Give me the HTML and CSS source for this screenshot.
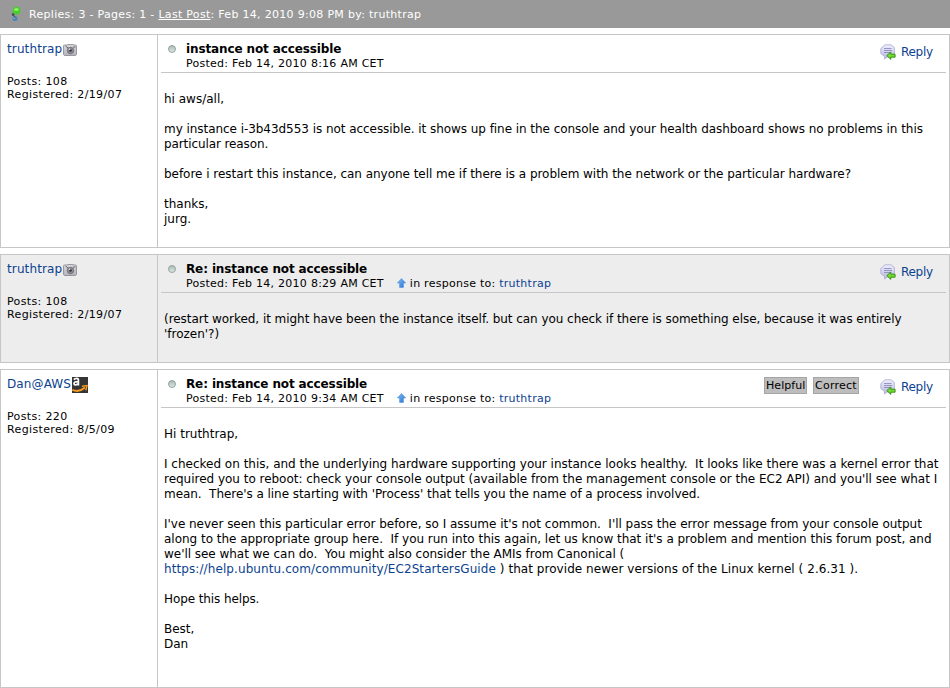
FILE: index.html
```
<!DOCTYPE html>
<html lang="en">
<head>
<meta charset="utf-8">
<title>instance not accessible</title>
<link rel="stylesheet" href="styles.css">
</head>
<body>
<svg class="sprites" width="0" height="0" aria-hidden="true">
  <defs>
    <linearGradient id="g-dot" x1="0" y1="0" x2="0" y2="1"><stop offset="0" stop-color="#a9b7b3"/><stop offset="1" stop-color="#dcebe6"/></linearGradient>
    <linearGradient id="g-bubble" x1="0" y1="0" x2="0" y2="1"><stop offset="0" stop-color="#f0f0ff"/><stop offset="1" stop-color="#b4b4e0"/></linearGradient>
    <linearGradient id="g-up" x1="0" y1="0" x2="1" y2="1"><stop offset="0" stop-color="#7fc0f8"/><stop offset="1" stop-color="#2a6ed0"/></linearGradient>
    <linearGradient id="g-cam" x1="0" y1="0" x2="0" y2="1"><stop offset="0" stop-color="#d8d8dc"/><stop offset="1" stop-color="#b4b3bb"/></linearGradient>
  </defs>
  <symbol id="dot" viewBox="0 0 8 8"><circle cx="4" cy="4" r="3.500" fill="url(#g-dot)" stroke="#8f9d99" stroke-width=".9"/></symbol>
  <symbol id="up" viewBox="0 0 9 10"><path d="M4.500.5 8.600 5H6.400v4.400H2.600V5H.4Z" fill="url(#g-up)" stroke="#4c8fdc" stroke-width=".6"/></symbol>
  <symbol id="camera" viewBox="0 0 14 12"><path d="M1.500 1H4l1-.5h5l1 .5h1.500q1 0 1 1v8q0 1-1 1.500h-11q-1-.5-1-1.500V2q0-1 1-1Z" fill="url(#g-cam)" stroke="#88878f" stroke-width=".8"/><path d="m2.500 2 2.500 2M10 3h2.500" stroke="#68656d"/><circle cx="7.500" cy="6.500" r="3.200" fill="#8e8c94" stroke="#66646c" stroke-width=".8"/><circle cx="7.500" cy="6.500" r="1.300" fill="#35333a"/><circle cx="6.500" cy="5.200" r=".8" fill="#eee"/></symbol>
  <symbol id="reply" viewBox="0 0 16 16"><path d="M5 .8h6L14.400 3.500v6l-3 3.500H7l-2.500 2 .1-2.500L.8 9.500v-5Z" fill="url(#g-bubble)" stroke="#aaaad2" stroke-width=".8" stroke-linejoin="round"/><path d="M4 4.500h7.500M4 6.500h8M4 8.500h6.500" stroke="#8484b4" stroke-width=".8"/><path d="m6.800 11.600 4-3.600v2.200h4.300v3H10.800v2.200Z" fill="#74dc2c" stroke="#2c8a12" stroke-width=".9" stroke-linejoin="round"/></symbol>
  <symbol id="amazon" viewBox="0 0 16 16"><rect width="16" height="16" fill="#353535"/><path d="M1.800 2.600Q3 1.200 4.700 1.300 6.500 1.500 6.400 3.200V8.500M6.300 4.600Q2 4.500 2 6.600 2.300 9 6.200 7" fill="none" stroke="#fff" stroke-width="1.700"/><path d="M.3 12.800Q7 15.800 13 10.600" fill="none" stroke="#f79a20" stroke-width="2"/><path d="m10 9.200 5-.7-1.200 4.800" fill="none" stroke="#f79a20" stroke-width="1.400"/></symbol>
  <symbol id="thread" viewBox="0 0 12 16"><circle cx="3.200" cy="8.600" r="1.500" fill="#46505a"/><circle cx="5" cy="12.400" r="2.500" fill="#4b83b8"/><circle cx="4.300" cy="11.800" r="1" fill="#9cc4e6"/><path d="M3 8.500 5 12" stroke="#46505a"/><circle cx="6.600" cy="4.600" r="3.900" fill="#42cf27"/><ellipse cx="6.400" cy="3.400" rx="2.400" ry="1.500" fill="#8bf065"/></symbol>
</svg>

<header class="bar">
  <svg class="thread-icon"><use href="#thread"/></svg>
  <span class="bar-text">Replies: 3 - Pages: 1 - <u>Last Post</u>: Feb 14, 2010 9:08 PM by: truthtrap</span>
</header>

<article class="post first">
  <aside class="author">
    <div class="name"><a>truthtrap</a><svg class="cam"><use href="#camera"/></svg></div>
    <p>Posts: 108</p><p>Registered: 2/19/07</p>
  </aside>
  <section class="main">
    <div class="head">
      <svg class="dot"><use href="#dot"/></svg>
      <div class="subject">
        <h2>instance not accessible</h2>
        <div class="meta"><span>Posted: Feb 14, 2010 8:16 AM CET</span></div>
      </div>
      <a class="reply"><svg><use href="#reply"/></svg><span>Reply</span></a>
    </div>
    <div class="body"><p>hi aws/all,</p>
<p><span class="tight">my instance i-3b43d553 is not accessible. it shows up fine in the console and your health dashboard shows no problems in this</span><br><span class="tighter">particular reason.</span></p>
<p><span class="snug">before i restart this instance, can anyone tell me if there is a problem with the network or the particular hardware?</span></p>
<p>thanks,<br>jurg.</p></div>
  </section>
</article>

<article class="post second">
  <aside class="author">
    <div class="name"><a>truthtrap</a><svg class="cam"><use href="#camera"/></svg></div>
    <p>Posts: 108</p><p>Registered: 2/19/07</p>
  </aside>
  <section class="main">
    <div class="head">
      <svg class="dot"><use href="#dot"/></svg>
      <div class="subject">
        <h2>Re: instance not accessible</h2>
        <div class="meta"><span>Posted: Feb 14, 2010 8:29 AM CET</span><svg class="up"><use href="#up"/></svg><span>in response to: <a>truthtrap</a></span></div>
      </div>
      <a class="reply"><svg><use href="#reply"/></svg><span>Reply</span></a>
    </div>
    <div class="body"><p><span class="tight">(restart worked, it might have been the instance itself. but can you check if there is something else, because it was entirely</span><br>'frozen'?)</p></div>
  </section>
</article>

<article class="post third">
  <aside class="author">
    <div class="name"><a>Dan@AWS</a><svg class="amz"><use href="#amazon"/></svg></div>
    <p>Posts: 220</p><p>Registered: 8/5/09</p>
  </aside>
  <section class="main">
    <div class="head">
      <svg class="dot"><use href="#dot"/></svg>
      <div class="subject">
        <h2>Re: instance not accessible</h2>
        <div class="meta"><span>Posted: Feb 14, 2010 9:34 AM CET</span><svg class="up"><use href="#up"/></svg><span>in response to: <a>truthtrap</a></span></div>
      </div>
      <span class="tag helpful">Helpful</span><span class="tag correct">Correct</span>
      <a class="reply"><svg><use href="#reply"/></svg><span>Reply</span></a>
    </div>
    <div class="body"><p>Hi truthtrap,</p>
<p>I checked on this, and the underlying hardware supporting your instance looks healthy.&nbsp; It looks like there was a kernel error that<br><span class="near">required you to reboot: check your console output (available from the management console or the EC2 API) and you'll see what I</span><br><span class="tight">mean.&nbsp; There's a line starting with 'Process' that tells you the name of a process involved.</span></p>
<p><span class="near">I've never seen this particular error before, so I assume it's not common.&nbsp; I'll pass the error message from your console output<br>along to the appropriate group here.&nbsp; If you run into this again, let us know that it's a problem and mention this forum post, and</span><br><span class="snug">we'll see what we can do.&nbsp; You might also consider the AMIs from Canonical (</span><br><span class="loose"><a>https://help.ubuntu.com/community/EC2StartersGuide</a> ) that provide newer versions of the Linux kernel ( 2.6.31 ).</span></p>
<p><span class="tighter">Hope this helps.</span></p>
<p>Best,<br>Dan</p></div>
  </section>
</article>
</body>
</html>
```
FILE: styles.css
```
* { box-sizing: border-box; }
body { margin: 0; background: #fff; color: #000; font: 11px/13px Verdana, "DejaVu Sans", sans-serif; white-space: nowrap; }
p, h2 { margin: 0; }
a { color: #0b4290; }
svg { display: block; flex: none; }
.sprites { position: absolute; }
.bar { height: 28px; background: #999; color: #fff; display: flex; align-items: center; padding-left: 10px; }
.bar-text { letter-spacing: .3px; }
.thread-icon { width: 12px; height: 16px; margin-right: 7px; }
.post { display: flex; border: 1px solid #c6c6c6; }
.first { height: 214px; margin-top: 6px; }
.second { height: 109px; margin-top: 6px; background: #ededed; }
.third { height: 319px; margin-top: 6px; }
.author { width: 157px; border-right: 1px solid #c6c6c6; padding: 7px 0 0 6px; flex: none; letter-spacing: .36px; }
.name { display: flex; font-size: 12px; line-height: 15px; height: 33px; letter-spacing: .12px; }
.cam { width: 14px; height: 12px; margin: 2px 0 0 1px; }
.amz { width: 16px; height: 16px; margin-left: 1px; }
.main { flex: 1; padding: 0 3px; }
.head { height: 38px; border-bottom: 1px solid #c6c6c6; display: flex; padding: 7px 0 0 7px; }
.dot { width: 8px; height: 8px; margin-top: 3px; }
.subject { margin-left: 10px; flex: 1; }
h2 { font-size: 12px; line-height: 15px; letter-spacing: -.12px; }
.meta { display: flex; letter-spacing: .26px; }
.up { width: 9px; height: 10px; margin: 1px 4px 0 13px; }
.reply { display: flex; font-size: 12px; line-height: 15px; padding-top: 3px; width: 66px; letter-spacing: -.3px; }
.reply svg { width: 16px; height: 16px; margin: -1px 5px 0 0; }
.tag { height: 17px; line-height: 16px; border: 1px solid #a5a5a5; background: #bdbdbd; padding-left: 1px; font-size: 11px; }
.helpful { width: 43px; margin-right: 6px; letter-spacing: .05px; }
.correct { width: 46px; margin-right: 21px; letter-spacing: .25px; }
.body { padding: 19px 0 0 3px; font-size: 12px; line-height: 15px; }
.body p { margin-bottom: 15px; }
.near { letter-spacing: -.02px; }
.snug { letter-spacing: -.034px; }
.tight { letter-spacing: -.05px; }
.tighter { letter-spacing: -.1px; }
.loose { letter-spacing: .05px; }
.loose a { letter-spacing: .09px; }
```
